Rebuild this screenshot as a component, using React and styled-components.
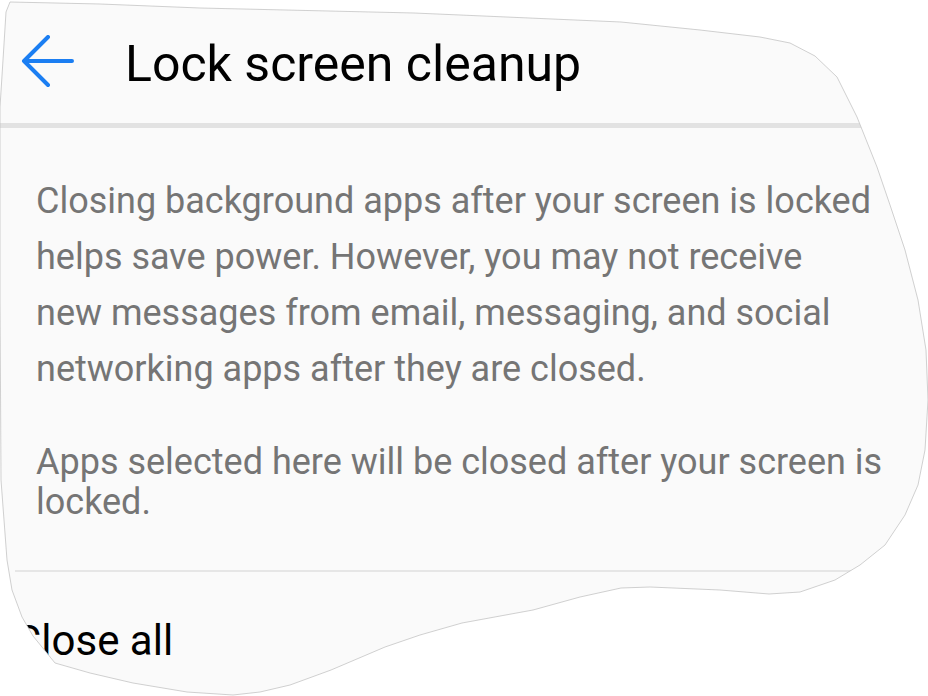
import React from "react";
import styled, { createGlobalStyle } from "styled-components";

const GlobalStyle = createGlobalStyle`
  html, body {
    margin: 0;
    padding: 0;
    background: #ffffff;
  }
  body {
    font-family: Roboto, "Noto Sans", "Liberation Sans", sans-serif;
  }
`;

const SHAPE = [
  [10, 2], [100, 4], [200, 8], [414, 13], [621, 22], [700, 30], [760, 37],
  [790, 43], [815, 56], [837, 77], [857, 117], [877, 167], [890, 205],
  [905, 250], [918, 300], [926, 350], [928, 400], [925, 450], [918, 485],
  [905, 515], [885, 545], [860, 565], [835, 580], [800, 592], [769, 594],
  [720, 590], [650, 587], [621, 588], [580, 597], [533, 610], [462, 623],
  [420, 635], [385, 647], [331, 670], [290, 685], [260, 692], [233, 695],
  [187, 692], [133, 683], [90, 673], [55, 663], [33, 636], [22, 617],
  [12, 590], [7, 560], [4, 520], [1, 480], [0, 300], [0, 107], [3, 60],
  [6, 12],
];

const clipPolygon = `polygon(${SHAPE.map(([x, y]) => `${x}px ${y}px`).join(", ")})`;
const outlinePoints = SHAPE.map(([x, y]) => `${x},${y}`).join(" ");

const Frame = styled.div`
  position: relative;
  width: 928px;
  height: 696px;
  overflow: hidden;
`;

const Sheet = styled.div`
  width: 928px;
  height: 696px;
  background: #fafafa;
  clip-path: ${clipPolygon};
  display: flex;
  flex-direction: column;
`;

const Header = styled.header`
  height: 123px;
  display: flex;
  align-items: center;
  padding-left: 21px;
  gap: 50px;
  box-sizing: border-box;
`;

const BackIcon = styled.svg`
  width: 54px;
  height: 54px;
  flex: none;
`;

const Title = styled.h1`
  margin: 5px 0 0 0;
  font-size: 50px;
  font-weight: 400;
  color: #000000;
  white-space: nowrap;
`;

const HeaderRule = styled.div`
  height: 5px;
  background: #e2e2e2;
`;

const Description = styled.div`
  padding: 45px 0 0 36px;
  display: flex;
  flex-direction: column;
  gap: 45px;
  color: #757575;
  font-size: 36px;
`;

const Paragraph = styled.p`
  margin: 0;
  line-height: ${(p) => p.$lh}px;
`;

const Line = styled.span`
  display: block;
  white-space: nowrap;
`;

const ListRule = styled.div`
  margin: 48px 0 0 15px;
  height: 2px;
  background: #e6e6e6;
`;

const Row = styled.div`
  padding: 44px 0 0 14px;
  font-size: 42px;
  color: #000000;
  white-space: nowrap;
`;

const Outline = styled.svg`
  position: absolute;
  left: 0;
  top: 0;
  pointer-events: none;
`;

export default function App() {
  return (
    <>
      <GlobalStyle />
      <Frame>
        <Sheet>
          <Header>
            <BackIcon viewBox="21 35 54 54" aria-hidden="true">
              <path
                d="M72 61 H25 M48 37 L24 61 L48 85"
                fill="none"
                stroke="#1b7ef2"
                strokeWidth="4"
                strokeLinecap="round"
                strokeLinejoin="round"
              />
            </BackIcon>
            <Title>Lock screen cleanup</Title>
          </Header>
          <HeaderRule />
          <Description>
            <Paragraph $lh={56}>
              <Line>Closing background apps after your screen is locked</Line>
              <Line>helps save power. However, you may not receive</Line>
              <Line>new messages from email, messaging, and social</Line>
              <Line>networking apps after they are closed.</Line>
            </Paragraph>
            <Paragraph $lh={40}>
              <Line>Apps selected here will be closed after your screen is</Line>
              <Line>locked.</Line>
            </Paragraph>
          </Description>
          <ListRule />
          <Row>Close all</Row>
        </Sheet>
        <Outline width="928" height="696" viewBox="0 0 928 696">
          <polygon points={outlinePoints} fill="none" stroke="#c4c4c4" strokeWidth="0.8" />
        </Outline>
      </Frame>
    </>
  );
}
